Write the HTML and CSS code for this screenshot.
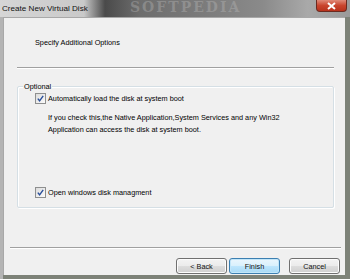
FILE: index.html
```html
<!DOCTYPE html>
<html lang="en">
<head>
    <meta charset="UTF-8">
    <title>Create New Virtual Disk</title>
    <link rel="stylesheet" href="styles.css">
</head>
<body>
    <div class="window">
        <!-- Title bar -->
        <div class="titlebar">
            <span class="title">Create New Virtual Disk</span>
            <span class="watermark">SOFTPEDIA</span>
            <div class="close-btn">
                <svg width="9" height="8" viewBox="0 0 9 8"><path d="M1 1 L8 7 M8 1 L1 7" stroke="#fff" stroke-width="2"/></svg>
            </div>
        </div>

        <div class="frame">
            <div class="client">
                <div class="header">Specify Additional Options</div>
                <div class="separator sep-top"></div>

                <!-- Options group -->
                <div class="group">
                    <span class="group-label">Optional</span>
                    <div class="check-row">
                        <span class="checkbox">
                            <svg width="9" height="9" viewBox="0 0 9 9"><path d="M1.8 4.6 L3.6 6.8 L7.2 1.8" fill="none" stroke="#2a4f9a" stroke-width="1.4"/></svg>
                        </span>
                        <span>Automatically load the disk at system boot</span>
                    </div>
                    <p class="note">If you check this,the Native Application,System Services and any Win32<br>Application can access the disk at system boot.</p>
                    <div class="check-row last">
                        <span class="checkbox">
                            <svg width="9" height="9" viewBox="0 0 9 9"><path d="M1.8 4.6 L3.6 6.8 L7.2 1.8" fill="none" stroke="#2a4f9a" stroke-width="1.4"/></svg>
                        </span>
                        <span>Open windows disk managment</span>
                    </div>
                </div>

                <div class="separator sep-bottom"></div>

                <div class="buttons">
                    <button class="btn">&lt; Back</button>
                    <button class="btn default">Finish</button>
                    <button class="btn cancel">Cancel</button>
                </div>
            </div>
        </div>
    </div>
</body>
</html>
```

FILE: styles.css
```css
/* Genel */
body {
    margin: 0;
    font-family: "Liberation Sans", Arial, sans-serif;
    font-size: 7.3px;
    color: #000;
    background: #8c8f88;
}

.window {
    width: 350px;
    height: 279px;
    display: flex;
    flex-direction: column;
    overflow: hidden;
}

/* Baslik cubugu */
.titlebar {
    height: 17px;
    position: relative;
    display: flex;
    align-items: center;
    background: linear-gradient(to right, #d6d6d6 0%, #c9c9c9 24%, #4a4a4a 30%, #6d6d6d 40%, #7d7d7d 60%, #8a8a8a 75%, #a9a9a9 88%, #9a9a9a 100%);
}

.title {
    font-size: 8.1px;
    color: #111;
    padding-left: 2px;
    position: relative;
    z-index: 1;
}

.watermark {
    position: absolute;
    left: 130px;
    top: 0;
    font-family: "DejaVu Serif", serif;
    font-weight: bold;
    font-size: 14px;
    line-height: 15px;
    letter-spacing: 2px;
    color: rgba(190, 190, 190, 0.35);
}

.close-btn {
    position: absolute;
    right: 3px;
    top: 0;
    width: 31px;
    height: 12px;
    border: 1px solid #6b2a20;
    border-top: none;
    border-radius: 0 0 4px 4px;
    background: linear-gradient(#e08a78, #c9452e 50%, #b8321c);
    display: flex;
    justify-content: center;
    align-items: center;
    box-sizing: border-box;
}

/* Pencere cercevesi */
.frame {
    flex: 1;
    display: flex;
    padding: 0 5px 4px 3px;
    background: linear-gradient(to right, #b4b4b4 0, #b4b4b4 3px, #7d8278 3px);
}

.client {
    flex: 1;
    display: flex;
    flex-direction: column;
    background: #f0f0f0;
    border-top: 1px solid #a8a8a8;
    border-left: 1px solid #a8a8a8;
}

.header {
    height: 49px;
    padding-left: 31px;
    display: flex;
    align-items: center;
}

.separator {
    height: 1px;
    background: #a0a0a0;
    border-bottom: 1px solid #fff;
}

.sep-top {
    margin: 0 11px 0 13px;
}

/* Grup kutusu */
.group {
    margin: 17px 11px 0 13px;
    padding: 0 0 9px 17px;
    border: 1px solid #d5dfe5;
    box-shadow: inset 1px 1px 0 #fff, 1px 1px 0 #fff;
    border-radius: 2px;
    height: 111px;
    display: flex;
    flex-direction: column;
}

.group-label {
    align-self: flex-start;
    margin: -5px 0 2px -12px;
    padding: 0 1px;
    background: #f0f0f0;
    line-height: 9px;
}

.check-row {
    display: flex;
    align-items: center;
    gap: 2px;
}

.check-row.last {
    margin-top: auto;
}

.checkbox {
    width: 9px;
    height: 9px;
    border: 1px solid #8e8f8f;
    background: linear-gradient(135deg, #dcdcdc, #fbfbfb);
    display: flex;
    justify-content: center;
    align-items: center;
}

.note {
    margin: 8px 0 0 13px;
    line-height: 12px;
}

.sep-bottom {
    margin: 39px 4px 0 6px;
}

/* Butonlar */
.buttons {
    display: flex;
    justify-content: flex-end;
    gap: 2px;
    padding: 9px 5px 0 0;
}

.btn {
    width: 51px;
    height: 16px;
    padding: 0;
    font-family: inherit;
    font-size: 7.3px;
    color: #111;
    border: 1px solid #707070;
    border-radius: 3px;
    background: linear-gradient(#f3f3f3 0%, #ebebeb 50%, #dddddd 51%, #cfcfcf 100%);
    box-shadow: inset 0 0 0 1px #fcfcfc;
}

.btn.default {
    border-color: #3c7fb1;
    background: linear-gradient(#eaf6fd 0%, #d9f0fc 50%, #bee6fd 51%, #a7d9f5 100%);
    box-shadow: inset 0 0 0 1px #c2e6f9;
}

.btn.cancel {
    margin-left: 7px;
}
```
